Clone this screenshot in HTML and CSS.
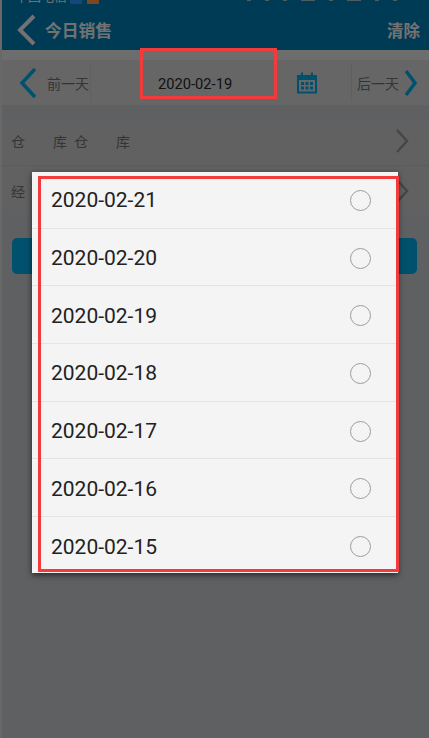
FILE: index.html
```html
<!DOCTYPE html>
<html lang="zh-CN">
<head>
  <meta charset="UTF-8" />
  <meta name="viewport" content="width=device-width, initial-scale=1.0" />
  <title>今日销售</title>
  <link rel="stylesheet" href="styles.css">
</head>
<body>
  <div class="screen">
    <div class="top-bar">
      <div class="status">
        <span class="carrier">中国电信</span>
        <span class="sim blue"></span>
        <span class="sim orange"></span>
        <span class="status-right">
          <i></i><i></i><i></i><i class="wide"></i><i></i><i class="wide"></i><i></i><i></i>
        </span>
      </div>
      <div class="title-bar">
        <svg class="back" width="20" height="32" viewBox="0 0 20 32"><polyline points="17,2 3,16 17,30" /></svg>
        <span class="title">今日销售</span>
        <span class="clear">清除</span>
      </div>
    </div>

    <div class="date-bar">
      <svg class="arrow" width="19" height="32" viewBox="0 0 19 32"><polyline points="16,2 3,16 16,30" /></svg>
      <span class="day-btn prev">前一天</span>
      <span class="current-date">2020-02-19</span>
      <svg class="calendar" width="22" height="22" viewBox="0 0 22 22">
        <path d="M1 3h4V0.5h2V3h8V0.5h2V3h4v18.5H1z M3 8v11.5h16V8z" fill-rule="evenodd" />
        <rect x="5" y="10" width="3" height="3" /><rect x="9.5" y="10" width="3" height="3" /><rect x="14" y="10" width="3" height="3" />
        <rect x="5" y="14.5" width="3" height="3" /><rect x="9.5" y="14.5" width="3" height="3" /><rect x="14" y="14.5" width="3" height="3" />
      </svg>
      <span class="day-btn next">后一天</span>
      <svg class="arrow forward" width="15" height="28" viewBox="0 0 15 28"><polyline points="3,2 12,14 3,26" /></svg>
    </div>

    <div class="filter-row first">
      <span class="label">仓库</span>
      <span class="label">仓库</span>
      <svg class="more" width="14" height="26" viewBox="0 0 14 26"><polyline points="2,2 12,13 2,24" /></svg>
    </div>
    <div class="filter-row second">
      <span class="label">经</span>
      <svg class="more" width="14" height="26" viewBox="0 0 14 26"><polyline points="2,2 12,13 2,24" /></svg>
    </div>

    <div class="query-btn"></div>
  </div>

  <div class="overlay"></div>

  <div class="date-dialog">
    <div class="date-list">
      <div class="date-row"><span>2020-02-21</span><i class="radio"></i></div>
      <div class="date-row"><span>2020-02-20</span><i class="radio"></i></div>
      <div class="date-row"><span>2020-02-19</span><i class="radio"></i></div>
      <div class="date-row"><span>2020-02-18</span><i class="radio"></i></div>
      <div class="date-row"><span>2020-02-17</span><i class="radio"></i></div>
      <div class="date-row"><span>2020-02-16</span><i class="radio"></i></div>
      <div class="date-row"><span>2020-02-15</span><i class="radio"></i></div>
    </div>
  </div>

  <div class="mark mark-date"></div>
  <div class="mark mark-list"></div>
</body>
</html>
```

FILE: styles.css
```css
:root {
  --blue: #0076aa;
  --accent: #00a2dc;
  --red: #f33a3c;
}

html, body {
  height: 100%;
}

body {
  margin: 0;
  position: relative;
  overflow: hidden;
  background-color: #d0d0d0;
  font-family: 'Roboto', 'Noto Sans CJK SC', sans-serif;
}

.screen {
  margin-left: 2px;
  height: 100%;
  background-color: #bec0c4;
}

.top-bar {
  background-color: var(--blue);
  color: #e4e4e4;
  height: 50px;
}

.status {
  display: flex;
  align-items: flex-end;
  height: 4px;
  padding-left: 13px;
  overflow: hidden;
}

.carrier {
  font-size: 13px;
  line-height: 14px;
  flex: none;
  margin-right: 3px;
}

.sim {
  width: 12px;
  height: 4px;
  margin-right: 5px;
  border-radius: 0 0 1px 1px;
}

.sim.blue { background-color: #2f8cff; }
.sim.orange { background-color: #ff8a3c; }

.status-right {
  display: flex;
  align-self: flex-start;
  gap: 14px;
  margin-left: 143px;
}

.status-right i {
  width: 4px;
  height: 1px;
  background-color: #9fb6c2;
}

.status-right i.wide { width: 14px; }

.title-bar {
  display: flex;
  align-items: center;
  box-sizing: border-box;
  height: 46px;
  padding: 5px 9px 0 15px;
  font-weight: 700;
}

.back {
  flex: none;
  margin-right: 8px;
}

.back polyline {
  fill: none;
  stroke: #e4e4e4;
  stroke-width: 4;
}

.title { font-size: 16.8px; }

.clear {
  margin-left: auto;
  font-size: 16.5px;
}

.date-bar {
  display: flex;
  align-items: center;
  height: 45px;
  margin-top: 10px;
  padding-left: 17px;
  background-color: #cdcdcd;
  box-shadow: 0 -10px 0 #dadada;
}

.arrow {
  flex: none;
}

.arrow polyline {
  fill: none;
  stroke: var(--accent);
  stroke-width: 3.5;
}

.arrow.forward {
  margin-left: 2px;
}

.day-btn {
  display: flex;
  align-items: center;
  height: 38px;
  font-size: 14px;
  color: #6a6a6a;
}

.day-btn.prev {
  margin-left: 9px;
  width: 43px;
  border-right: 1px solid #c0c0c0;
}

.day-btn.next {
  margin-left: 33px;
  padding-left: 5px;
  width: 44px;
  border-left: 1px solid #c0c0c0;
}

.current-date {
  margin-left: 67px;
  padding-top: 3px;
  font-size: 14.7px;
  color: #222;
  width: 74px;
  white-space: nowrap;
}

.calendar {
  flex: none;
  margin-left: 64px;
  fill: var(--accent);
}

.filter-row {
  display: flex;
  align-items: center;
  box-sizing: border-box;
  padding-left: 9px;
  background-color: #c2c2c2;
  font-size: 14px;
  color: #6a6a6a;
}

.filter-row.first {
  height: 46px;
  margin-top: 15px;
  padding-bottom: 3px;
  border-bottom: 1px solid #b6b6b6;
  gap: 7px;
}

.filter-row.second {
  height: 49px;
}

.label {
  display: block;
  width: 56px;
  text-align-last: justify;
}

.more {
  margin-left: auto;
  margin-right: 20px;
}

.more polyline {
  fill: none;
  stroke: #8c8c8c;
  stroke-width: 2.5;
}

.query-btn {
  height: 36px;
  margin: 23px 12px 0 10px;
  border-radius: 5px;
  background-color: var(--accent);
}

.overlay {
  position: absolute;
  top: 0;
  right: 0;
  bottom: 0;
  left: 0;
  background-color: rgba(0, 0, 0, 0.5);
}

.date-dialog {
  position: absolute;
  top: 172px;
  left: 32px;
  width: 366px;
  height: 401px;
  overflow: hidden;
  background-color: #f4f4f4;
  box-shadow: 0 2px 6px rgba(0, 0, 0, 0.6);
}

.date-list {
  margin-top: -1px;
}

.date-row {
  display: flex;
  align-items: center;
  justify-content: space-between;
  box-sizing: border-box;
  height: 57.7px;
  padding: 2px 27px 0 19px;
  border-bottom: 1px solid #e4e4e4;
  font-size: 21px;
  color: #222;
}

.date-row:last-child {
  border-bottom: 0;
}

.radio {
  box-sizing: border-box;
  width: 21px;
  height: 21px;
  border: 1.5px solid #9c9c9c;
  border-radius: 50%;
}

.mark {
  position: absolute;
  box-sizing: border-box;
  border: 3px solid var(--red);
}

.mark-date {
  top: 48px;
  left: 140px;
  width: 137px;
  height: 51px;
}

.mark-list {
  top: 176px;
  left: 38px;
  width: 361px;
  height: 396px;
}
```
